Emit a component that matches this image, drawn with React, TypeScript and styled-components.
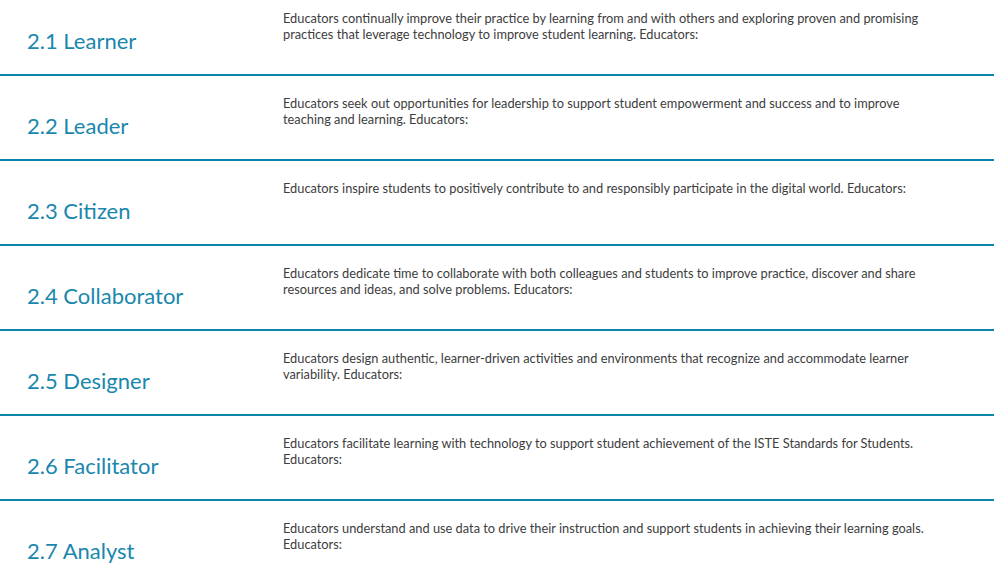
import React from "react";
import styled, { createGlobalStyle } from "styled-components";

const standards = [
    {
        num: "2.1",
        name: "Learner",
        text: "Educators continually improve their practice by learning from and with others and exploring proven and promising practices that leverage technology to improve student learning. Educators:",
    },
    {
        num: "2.2",
        name: "Leader",
        text: "Educators seek out opportunities for leadership to support student empowerment and success and to improve teaching and learning. Educators:",
    },
    {
        num: "2.3",
        name: "Citizen",
        text: "Educators inspire students to positively contribute to and responsibly participate in the digital world. Educators:",
    },
    {
        num: "2.4",
        name: "Collaborator",
        text: "Educators dedicate time to collaborate with both colleagues and students to improve practice, discover and share resources and ideas, and solve problems. Educators:",
    },
    {
        num: "2.5",
        name: "Designer",
        text: "Educators design authentic, learner-driven activities and environments that recognize and accommodate learner variability. Educators:",
    },
    {
        num: "2.6",
        name: "Facilitator",
        text: "Educators facilitate learning with technology to support student achievement of the ISTE Standards for Students. Educators:",
    },
    {
        num: "2.7",
        name: "Analyst",
        text: "Educators understand and use data to drive their instruction and support students in achieving their learning goals. Educators:",
    },
];

const App = () => {
    return (
        <>
            <GlobalStyle/>
            <StyledList>
                {standards.map(s => (
                    <StyledRow key={s.num}>
                        <StyledTitle>{s.num} {s.name}</StyledTitle>
                        <StyledText>{s.text}</StyledText>
                    </StyledRow>
                ))}
            </StyledList>
        </>
    )
}

export default App;

const GlobalStyle = createGlobalStyle`
    html, body {
        margin: 0;
        padding: 0;
        background: #ffffff;
        overflow: hidden;
    }
    body {
        font-family: Lato, "Open Sans", sans-serif;
    }
`

const StyledList = styled.div`
    display: flex;
    flex-direction: column;
    margin-top: -9px;
`

const StyledRow = styled.div`
    display: grid;
    grid-template-columns: 256px 1fr;
    align-items: start;
    height: 83px;
    padding-left: 27px;
    border-bottom: 2px solid #0b85a8;
`

const StyledTitle = styled.h2`
    margin: 37px 0 0;
    font-size: 22px;
    font-weight: 400;
    line-height: 26px;
    color: #1987ad;
    white-space: nowrap;
`

const StyledText = styled.p`
    margin: 19px 0 0;
    max-width: 662px;
    font-size: 12.8px;
    line-height: 16px;
    color: #3d3d3d;
`
